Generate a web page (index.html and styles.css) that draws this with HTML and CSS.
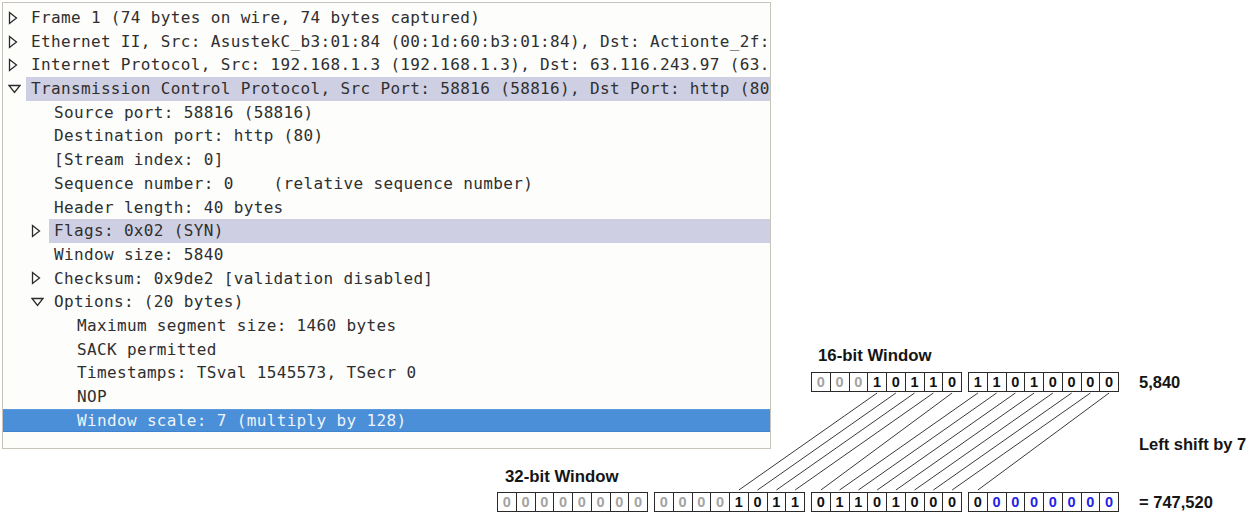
FILE: index.html
```html
<!DOCTYPE html>
<html>
<head>
<meta charset="utf-8">
<link rel="stylesheet" href="styles.css">
</head>
<body>
<div class="page">
  <div class="tree">
    <div class="row l0"><span class="exp"><svg width="10" height="14" viewBox="0 0 10 14"><polygon class="tri" points="1.5,1.5 8.5,7 1.5,12.5"/></svg></span><span class="label">Frame 1 (74 bytes on wire, 74 bytes captured)</span></div>
    <div class="row l0"><span class="exp"><svg width="10" height="14" viewBox="0 0 10 14"><polygon class="tri" points="1.5,1.5 8.5,7 1.5,12.5"/></svg></span><span class="label">Ethernet II, Src: AsustekC_b3:01:84 (00:1d:60:b3:01:84), Dst: Actionte_2f:47:87 (00:26:62:2f:47:87)</span></div>
    <div class="row l0"><span class="exp"><svg width="10" height="14" viewBox="0 0 10 14"><polygon class="tri" points="1.5,1.5 8.5,7 1.5,12.5"/></svg></span><span class="label">Internet Protocol, Src: 192.168.1.3 (192.168.1.3), Dst: 63.116.243.97 (63.116.243.97)</span></div>
    <div class="row l0 hl"><span class="exp"><svg width="13" height="10" viewBox="0 0 13 10"><polygon class="tri" points="1,1.5 12,1.5 6.5,8.5"/></svg></span><span class="label">Transmission Control Protocol, Src Port: 58816 (58816), Dst Port: http (80), Seq: 0, Len: 0</span></div>
    <div class="row l1"><span class="exp"></span><span class="label">Source port: 58816 (58816)</span></div>
    <div class="row l1"><span class="exp"></span><span class="label">Destination port: http (80)</span></div>
    <div class="row l1"><span class="exp"></span><span class="label">[Stream index: 0]</span></div>
    <div class="row l1"><span class="exp"></span><span class="label">Sequence number: 0    (relative sequence number)</span></div>
    <div class="row l1"><span class="exp"></span><span class="label">Header length: 40 bytes</span></div>
    <div class="row l1 hl"><span class="exp"><svg width="10" height="14" viewBox="0 0 10 14"><polygon class="tri" points="1.5,1.5 8.5,7 1.5,12.5"/></svg></span><span class="label">Flags: 0x02 (SYN)</span></div>
    <div class="row l1"><span class="exp"></span><span class="label">Window size: 5840</span></div>
    <div class="row l1"><span class="exp"><svg width="10" height="14" viewBox="0 0 10 14"><polygon class="tri" points="1.5,1.5 8.5,7 1.5,12.5"/></svg></span><span class="label">Checksum: 0x9de2 [validation disabled]</span></div>
    <div class="row l1"><span class="exp"><svg width="13" height="10" viewBox="0 0 13 10"><polygon class="tri" points="1,1.5 12,1.5 6.5,8.5"/></svg></span><span class="label">Options: (20 bytes)</span></div>
    <div class="row l2"><span class="exp"></span><span class="label">Maximum segment size: 1460 bytes</span></div>
    <div class="row l2"><span class="exp"></span><span class="label">SACK permitted</span></div>
    <div class="row l2"><span class="exp"></span><span class="label">Timestamps: TSval 1545573, TSecr 0</span></div>
    <div class="row l2"><span class="exp"></span><span class="label">NOP</span></div>
    <div class="row l2 sel"><span class="exp"></span><span class="label">Window scale: 7 (multiply by 128)</span></div>
  </div>

  <div class="diagram">
    <div class="title t16">16-bit Window</div>
    <div class="bits b16">
      <div class="grp"><span class="c g">0</span><span class="c g">0</span><span class="c g">0</span><span class="c">1</span><span class="c">0</span><span class="c">1</span><span class="c">1</span><span class="c">0</span></div>
      <div class="grp"><span class="c">1</span><span class="c">1</span><span class="c">0</span><span class="c">1</span><span class="c">0</span><span class="c">0</span><span class="c">0</span><span class="c">0</span></div>
    </div>
    <div class="val v1">5,840</div>
    <div class="val v2">Left shift by 7</div>
    <div class="title t32">32-bit Window</div>
    <div class="bits b32">
      <div class="grp"><span class="c g">0</span><span class="c g">0</span><span class="c g">0</span><span class="c g">0</span><span class="c g">0</span><span class="c g">0</span><span class="c g">0</span><span class="c g">0</span></div>
      <div class="grp"><span class="c g">0</span><span class="c g">0</span><span class="c g">0</span><span class="c g">0</span><span class="c">1</span><span class="c">0</span><span class="c">1</span><span class="c">1</span></div>
      <div class="grp"><span class="c">0</span><span class="c">1</span><span class="c">1</span><span class="c">0</span><span class="c">1</span><span class="c">0</span><span class="c">0</span><span class="c">0</span></div>
      <div class="grp"><span class="c">0</span><span class="c b">0</span><span class="c b">0</span><span class="c b">0</span><span class="c b">0</span><span class="c b">0</span><span class="c b">0</span><span class="c b">0</span></div>
    </div>
    <div class="val v3">= 747,520</div>
    <svg class="lines" width="622" height="166" viewBox="0 0 622 166">
      <g stroke="#3a3a3a" stroke-width="1" fill="none">
        <line x1="380.1" y1="47" x2="241.9" y2="144"/>
        <line x1="398.9" y1="47" x2="260.6" y2="144"/>
        <line x1="417.6" y1="47" x2="279.4" y2="144"/>
        <line x1="436.4" y1="47" x2="298.1" y2="144"/>
        <line x1="455.1" y1="47" x2="323.9" y2="144"/>
        <line x1="480.9" y1="47" x2="342.6" y2="144"/>
        <line x1="499.6" y1="47" x2="361.4" y2="144"/>
        <line x1="518.4" y1="47" x2="380.1" y2="144"/>
        <line x1="537.1" y1="47" x2="398.9" y2="144"/>
        <line x1="555.9" y1="47" x2="417.6" y2="144"/>
        <line x1="574.6" y1="47" x2="436.4" y2="144"/>
        <line x1="593.4" y1="47" x2="455.1" y2="144"/>
        <line x1="612.1" y1="47" x2="480.9" y2="144"/>
      </g>
    </svg>
  </div>
</div>
</body>
</html>
```

FILE: styles.css
```css
html, body {
  margin: 0;
  padding: 0;
  background: #ffffff;
}

.page {
  position: relative;
  width: 1251px;
  height: 524px;
  overflow: hidden;
}

/* ---------- packet detail tree ---------- */
.tree {
  box-sizing: border-box;
  margin: 2px 0 0 2px;
  width: 769px;
  height: 447px;
  border: 1px solid #c8c4bb;
  background: #fdfdfc;
  padding-top: 3px;
  overflow: hidden;
  font-family: "DejaVu Sans Mono", "Liberation Mono", monospace;
  font-size: 16px;
  letter-spacing: 0.35px;
  color: #2f2f2f;
}

.row {
  display: flex;
  align-items: center;
  height: 23.7px;
}

.row.l0 { padding-left: 5px; }
.row.l1 { padding-left: 28px; }
.row.l2 { padding-left: 51px; }

.exp {
  flex: 0 0 18px;
  width: 18px;
  height: 100%;
  display: flex;
  align-items: center;
}

.tri {
  fill: none;
  stroke: #2a2a2a;
  stroke-width: 1.3;
  stroke-linejoin: miter;
}

.label {
  flex: 1;
  height: 100%;
  padding-left: 5px;
  line-height: 23.7px;
  white-space: pre;
  overflow: hidden;
}

.row.hl .label {
  background: #cfcfe3;
}

.row.sel {
  background: #4a8fd7;
  box-shadow: inset 0 1px 0 #5c9ade, inset 0 -1px 0 #3f84cf;
}

.row.sel .label {
  color: #eef3fb;
}

/* ---------- bit shift diagram ---------- */
.diagram {
  position: absolute;
  left: 497px;
  top: 346px;
  display: grid;
  grid-template-columns: 622px max-content;
  grid-template-rows: 20px 6px 20px 42px 20px 13px 20px 5px 20px;
  column-gap: 20px;
  font-family: "Liberation Sans", Arial, sans-serif;
  font-weight: bold;
  color: #151515;
}

.title {
  font-size: 16.8px;
  line-height: 20px;
  white-space: nowrap;
}

.t16 { grid-column: 1; grid-row: 1; padding-left: 321px; }
.t32 { grid-column: 1; grid-row: 7; padding-left: 8px; }

.val {
  grid-column: 2;
  font-size: 16.5px;
  line-height: 20px;
  white-space: nowrap;
}

.v1 { grid-row: 3; }
.v2 { grid-row: 5; }
.v3 { grid-row: 9; }

.bits {
  display: flex;
  gap: 6px;
}

.b16 { grid-column: 1; grid-row: 3; padding-left: 314px; }
.b32 { grid-column: 1; grid-row: 9; }

.grp {
  display: flex;
  box-sizing: border-box;
  height: 20px;
  border: 1px solid #2a2a2a;
  background: #ffffff;
}

.c {
  width: 17.75px;
  text-align: center;
  font-size: 14.5px;
  line-height: 18px;
  color: #111111;
}

.c + .c {
  border-left: 1px solid #2a2a2a;
}

.c.g { color: #a3a3a3; }
.c.b { color: #2323e6; }

.lines {
  position: absolute;
  left: 0;
  top: 0;
  pointer-events: none;
}
```
